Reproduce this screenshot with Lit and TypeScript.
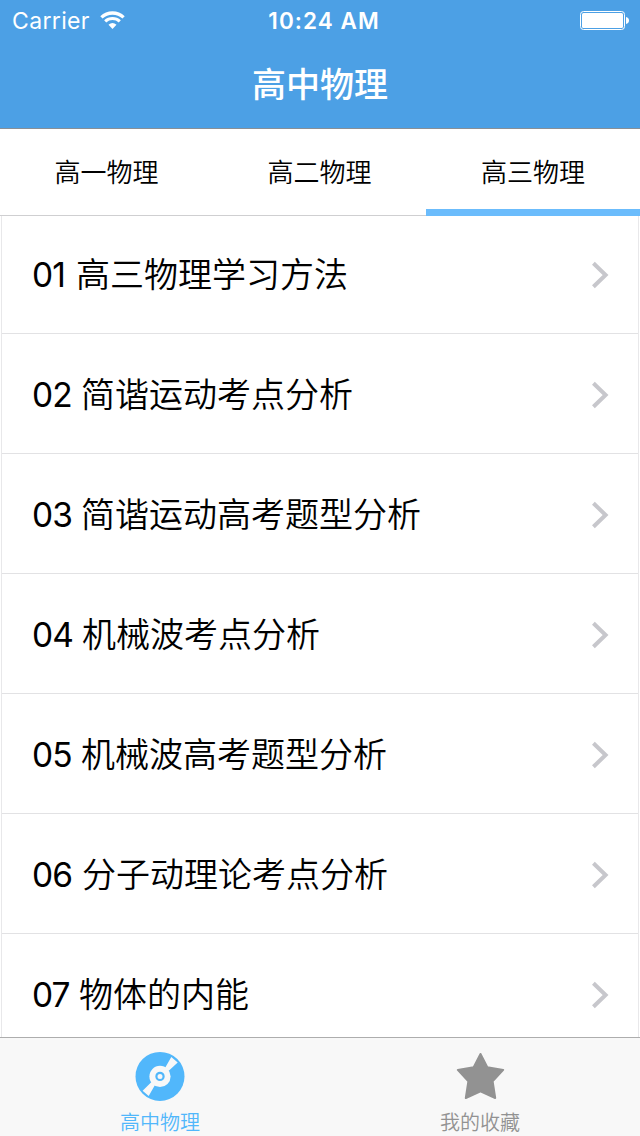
import { LitElement, html, css, svg } from "lit";
import { customElement, property, state } from "lit/decorators.js";

interface Chapter {
  no: string;
  title: string;
  /** Advance of the proportional figures plus the following space. */
  advance: number;
}

const CHAPTERS: Chapter[] = [
  { no: "01", title: "高三物理学习方法", advance: 44 },
  { no: "02", title: "简谐运动考点分析", advance: 49 },
  { no: "03", title: "简谐运动高考题型分析", advance: 49 },
  { no: "04", title: "机械波考点分析", advance: 50 },
  { no: "05", title: "机械波高考题型分析", advance: 49 },
  { no: "06", title: "分子动理论考点分析", advance: 50 },
  { no: "07", title: "物体的内能", advance: 47 },
];

@customElement("status-bar")
class StatusBar extends LitElement {
  static styles = css`
    :host {
      display: grid;
      grid-template-columns: 1fr auto 1fr;
      align-items: center;
      height: 40px;
      padding: 0 11px 0 12px;
      color: #fff;
      font-family: Inter, "Liberation Sans", sans-serif;
      font-size: 23px;
    }
    .left { display: flex; align-items: center; gap: 10px; }
    .carrier { letter-spacing: 0.35px; padding-top: 2px; }
    .time { font-weight: 600; font-size: 22.5px; letter-spacing: 1.05px; padding-left: 7px; }
    .battery { justify-self: end; display: block; }
    svg { display: block; }
  `;
  render() {
    return html`
      <div class="left">
        <span class="carrier">Carrier</span>
        <svg width="26" height="20" viewBox="0 0 26 20" fill="none" stroke="#fff">
          <path d="M1.4 7.4 A16.2 16.2 0 0 1 23.6 7.4" stroke-width="3.3" />
          <path d="M5.2 11.3 A10.8 10.8 0 0 1 19.8 11.3" stroke-width="3.1" />
          <path d="M12.5 19 L8.5 14.8 A6.1 6.1 0 0 1 16.5 14.8 Z" fill="#fff" stroke="none" />
        </svg>
      </div>
      <span class="time">10:24 AM</span>
      <svg class="battery" width="49" height="19" viewBox="0 0 49 19">
        <rect x="0.5" y="0.5" width="44" height="18" rx="3" fill="none" stroke="#fff" />
        <rect x="2" y="2" width="41" height="15" rx="1.5" fill="#fff" />
        <path d="M46 6 Q49 6.8 49 9.5 Q49 12.2 46 13 Z" fill="#fff" />
      </svg>
    `;
  }
}

@customElement("chapter-row")
class ChapterRow extends LitElement {
  @property({ attribute: false }) chapter!: Chapter;
  static styles = css`
    :host {
      display: flex;
      align-items: center;
      box-sizing: border-box;
      height: 120px;
      padding: 0 29px 0 30px;
      border-bottom: 1px solid #e2e2e4;
      font: 34px/50px "Noto Sans CJK SC", sans-serif;
      font-weight: 350;
      color: #000;
    }
    .no {
      flex: none;
      padding-top: 2px;
      font-family: Inter, sans-serif;
      font-weight: 400;
      font-size: 33.5px;
      letter-spacing: -1px;
      white-space: nowrap;
    }
    .title { flex: 1; white-space: nowrap; padding-bottom: 2px; }
    .chevron { display: block; margin-top: 3px; }
  `;
  render() {
    const { no, title, advance } = this.chapter;
    return html`
      <span class="no" style="width:${advance}px">${no}</span>
      <span class="title">${title}</span>
      <svg class="chevron" width="17" height="28" viewBox="0 0 17 28">
        <path d="M1.4 2.2 L13.6 14 L1.4 25.8" fill="none" stroke="#c7c7cc" stroke-width="4" />
      </svg>
    `;
  }
}

const discIcon = svg`
  <circle cx="25" cy="25.4" r="24.5" fill="#51b7fb" />
  <path d="M36.3 6 L42.7 11.5 L33.5 20 L30 17 Z M13.7 45 L7.6 39.8 L16.5 31 L20 34 Z" fill="#f8f8f8" />
  <circle cx="25" cy="25.4" r="10.6" fill="#f8f8f8" />
  <circle cx="25" cy="25.4" r="3.6" fill="none" stroke="#51b7fb" stroke-width="2.2" />
`;
const starIcon = svg`
  <path d="M25.5 3 L32.3 16.3 L48.2 18.9 L37.6 30.2 L40.2 47 L25.5 40.3 L10.8 47 L13.4 30.2 L2.8 18.9 L18.7 16.3 Z"
    fill="#929292" stroke="#929292" stroke-width="2" stroke-linejoin="round" />
`;

@customElement("app-root")
class AppRoot extends LitElement {
  @state() private active = 2;
  static styles = css`
    :host {
      display: flex;
      flex-direction: column;
      width: 640px;
      height: 1136px;
      overflow: hidden;
      background: #fff;
      font-family: "Noto Sans CJK SC", sans-serif;
      color: #000;
    }
    .header {
      flex: none;
      box-sizing: border-box;
      height: 129px;
      background: #4ca0e5;
      border-bottom: 1px solid #888f96;
    }
    .heading {
      margin: 0;
      height: 88px;
      font-size: 34px;
      font-weight: 500;
      line-height: 86px;
      text-align: center;
      color: #fff;
    }
    .segments {
      flex: none;
      display: grid;
      grid-template-columns: 213px 213px 214px;
      grid-template-rows: 87px;
      height: 87px;
    }
    .segment {
      box-sizing: border-box;
      border-bottom: 1px solid #cfcfd1;
      padding-top: 3px;
      font-size: 26px;
      font-weight: 350;
      line-height: 77px;
      text-align: center;
    }
    .segment.active {
      border-bottom: 7px solid #6bbcfc;
    }
    .list {
      flex: 1;
      min-height: 0;
      overflow: hidden;
      margin: 0 1px;
      border: solid #e8e8ea;
      border-width: 0 1px;
    }
    .rows { margin-top: -2px; }
    .tabbar {
      flex: none;
      display: grid;
      grid-template-columns: 1fr 1fr;
      box-sizing: border-box;
      height: 99px;
      border-top: 1px solid #adadad;
      background: #f8f8f8;
    }
    .tab {
      display: flex;
      flex-direction: column;
      align-items: center;
      padding-top: 13px;
      font-size: 20px;
      font-weight: 350;
      line-height: 30px;
      color: #929292;
    }
    .tab.current { color: #51b7fb; }
    .tab svg { display: block; margin-bottom: 6px; }
  `;
  render() {
    return html`
      <header class="header">
        <status-bar></status-bar>
        <h1 class="heading">高中物理</h1>
      </header>
      <nav class="segments">
        ${["高一物理", "高二物理", "高三物理"].map(
          (label, i) => html`<div
            class=${i === this.active ? "segment active" : "segment"}
            @click=${() => (this.active = i)}
          >${label}</div>`
        )}
      </nav>
      <main class="list">
        <div class="rows">
          ${CHAPTERS.map((c) => html`<chapter-row .chapter=${c}></chapter-row>`)}
        </div>
      </main>
      <footer class="tabbar">
        <div class="tab current">
          <svg width="50" height="50" viewBox="0 0 50 50">${discIcon}</svg>
          <span>高中物理</span>
        </div>
        <div class="tab">
          <svg width="50" height="50" viewBox="0 0 50 50">${starIcon}</svg>
          <span>我的收藏</span>
        </div>
      </footer>
    `;
  }
}
